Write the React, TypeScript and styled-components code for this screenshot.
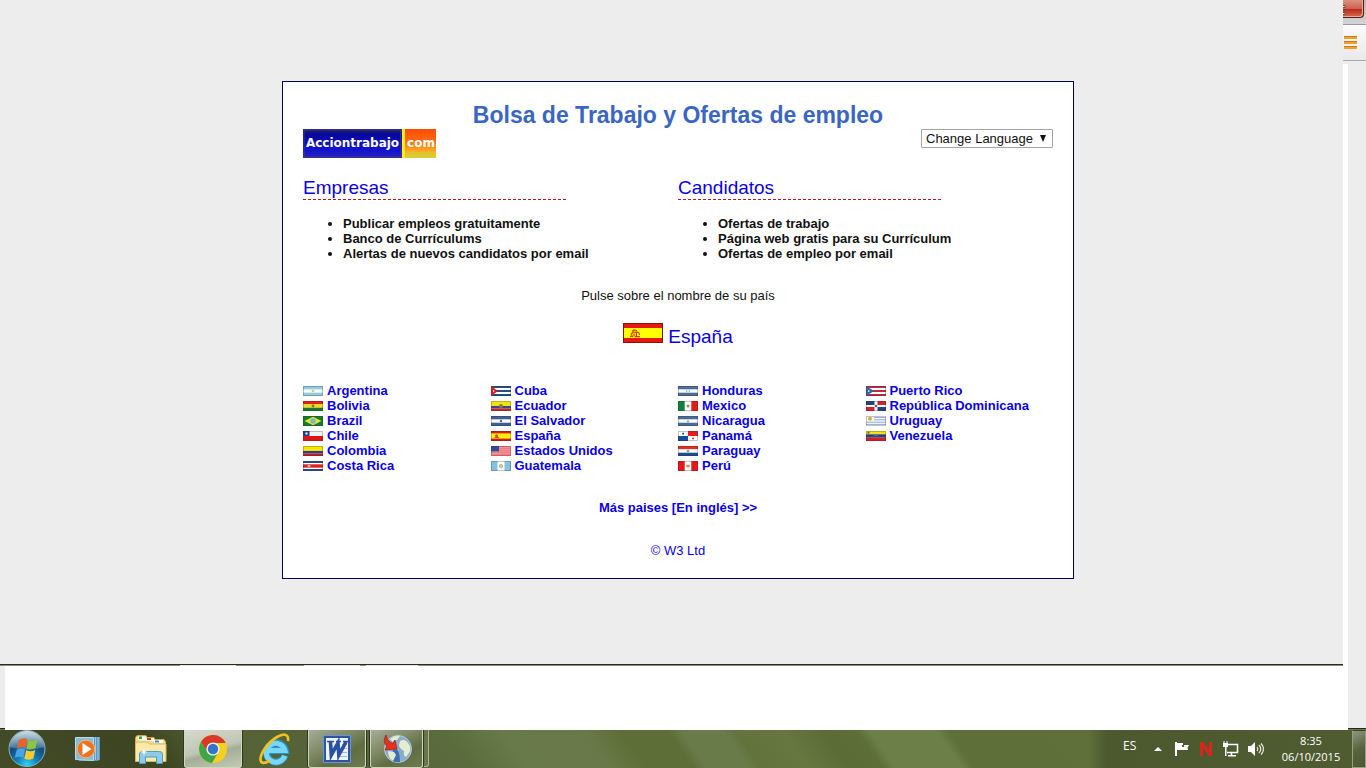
import React from "react";
import styled, { createGlobalStyle } from "styled-components";

const Global = createGlobalStyle`
  * { box-sizing: border-box; }
  body { margin: 0; background: #fff; font: 13px/15px "Liberation Sans", Arial, sans-serif; color: #111; }
  a { color: #0a00e4; text-decoration: none; }
  a:hover { text-decoration: underline; }
  svg { display: block; flex: none; }
`;

const Screen = styled.div`
  min-height: 100vh;
  display: flex;
  flex-direction: column;
`;
const Upper = styled.div`
  flex: 1;
  display: flex;
`;
const Page = styled.main`
  flex: 1;
  display: flex;
  flex-direction: column;
  background: #ededed;
`;
const PageBody = styled.div`
  flex: 1;
  padding: 81px 0 32px 13px;
`;
const Seam = styled.div`
  height: 2px;
  background:
    linear-gradient(90deg, transparent 180px, #e4e4e0 180px 236px, transparent 236px 304px,
      #e4e4e0 304px 360px, transparent 360px 366px, #e4e4e0 366px 418px, transparent 418px) 0 1px / 100% 1px no-repeat,
    linear-gradient(#2b2b20 50%, #8f8c74 50%);
`;

const Edge = styled.aside`
  width: 23px;
  display: flex;
  flex-direction: column;
  overflow: hidden;
`;
const CaptionBar = styled.div`
  height: 24px;
  background: linear-gradient(#b9b9bb, #d4d4d6);
`;
const CloseButton = styled.button`
  display: block;
  width: 21px;
  height: 18px;
  padding: 2px 0 0;
  border: solid #571d18;
  border-width: 0 1px 1px 0;
  border-radius: 0 0 4px 0;
  background: linear-gradient(#dc8f7f, #cf6350 50%, #b42a17 52%, #d9684c);
  box-shadow: inset -1px -1px 0 #e9a899;
`;
const ToolStrip = styled.div`
  height: 37px;
  padding: 11px 0 0 1px;
  border-top: 1px solid #9a9a9a;
  border-bottom: 1px solid #a9a9a9;
  background: linear-gradient(#fbfbfb, #e9e9e9);
`;
const MenuButton = styled.button`
  display: block;
  padding: 0;
  border: 0;
  background: none;
`;
const Gutter = styled.div`
  flex: 1;
  margin-top: 3px;
  border-left: 5px solid #fff;
  background: #ededed;
  box-shadow: 0 -3px 0 #ededed;
`;

const Card = styled.section`
  width: 792px;
  max-width: 100%;
  margin: 0 auto;
  padding: 20px;
  border: 1px solid #000050;
  background: #fff;
`;
const Title = styled.h1`
  margin: 0;
  font-size: 23px;
  line-height: 27px;
  text-align: center;
  color: #3a66c2;
`;
const Header = styled.header`
  display: flex;
  justify-content: space-between;
  align-items: flex-start;
  margin-bottom: 18px;
`;
const Logo = styled.a`
  display: flex;
  height: 29px;
  font: bold 12px/29px "DejaVu Sans", Verdana, sans-serif;
  color: #fff;
`;
const LogoName = styled.span`
  width: 99px;
  text-align: center;
  background: linear-gradient(#20205c, #0606a0 20%, #1414d0 75%, #2c22b4);
  box-shadow: inset 0 0 0 2px rgba(60, 60, 140, 0.5);
`;
const LogoSuffix = styled.span`
  width: 34px;
  padding-left: 1px;
  border-left: 3px solid #ffee11;
  text-align: center;
  background: linear-gradient(#ff4a08, #ff6a10 40%, #ffb028 80%, #d4cc30 84%, #dccb38);
`;
const SelectWrap = styled.div`
  position: relative;
`;
const Select = styled.select`
  appearance: none;
  display: block;
  width: 132px;
  height: 19px;
  padding: 0 16px 0 4px;
  border: 1px solid #a5a5a5;
  border-radius: 1px;
  background: #fff;
  color: #111;
  font: 13px/15px "Liberation Sans", Arial, sans-serif;
`;
const SelectArrow = styled.svg`
  position: absolute;
  right: 7px;
  top: 6px;
  pointer-events: none;
`;
const Columns = styled.div`
  display: grid;
  grid-template-columns: 1fr 1fr;
  margin-bottom: 27px;
`;
const Heading = styled.h2`
  width: 70%;
  margin: 0 0 16px;
  padding-top: 1px;
  border-bottom: 1px dashed #b01c24;
  font-size: 19px;
  line-height: 22px;
  font-weight: normal;
`;
const Features = styled.ul`
  margin: 0;
  padding-left: 40px;
  font-weight: bold;
`;
const Centered = styled.p<{ $gap?: number }>`
  margin: 0 0 ${(p) => p.$gap ?? 0}px;
  text-align: center;
`;
const MainCountry = styled.a`
  display: flex;
  justify-content: center;
  align-items: flex-start;
  gap: 5px;
  margin-bottom: 32px;
  font-size: 19px;
  line-height: 28px;
`;
const Countries = styled.ul`
  display: grid;
  grid-template: repeat(6, 15px) / repeat(4, 1fr);
  grid-auto-flow: column;
  margin: 0 0 27px;
  padding: 0;
  list-style: none;
  font-weight: bold;
`;
const CountryLink = styled.a`
  display: flex;
  align-items: center;
  gap: 4px;
  white-space: nowrap;
`;

const Blank = styled.div`
  display: flex;
  height: 64px;
  padding: 0 18px 0 5px;
  background: linear-gradient(#ededed 62px, #26281a 62px 63px, #6d7558 63px);
`;
const BlankSheet = styled.div`
  flex: 1;
  background: #fff;
`;

const Taskbar = styled.footer`
  display: flex;
  height: 38px;
  background: linear-gradient(55deg,
    #444b27 0%, #3c4422 12%, #556235 17%, #56643a 28%, #5b6c3d 34%, #697a4a 38%, #687848 43.8%,
    #5d6e37 46.5%, #5d6e37 49.8%, #697b49 50.8%, #697b49 53.8%, #62733c 54.7%, #66773f 58%,
    #5b6c37 61%, #5d6e37 63.4%, #6c7f48 64.3%, #6c7f48 69.1%, #5e6f39 70%, #60713a 100%);
`;
const Tasks = styled.nav`
  flex: 1;
  display: flex;
  padding-left: 7px;
`;
const TaskButton = styled.button<{ $width: number; $state?: "open" | "active"; $gap?: number }>`
  display: flex;
  justify-content: center;
  align-items: center;
  width: ${(p) => p.$width}px;
  height: 38px;
  margin-right: ${(p) => p.$gap ?? 0}px;
  padding: 0;
  border: ${(p) => (p.$state ? "solid #d0d6bc" : "solid transparent")};
  border-width: 0 1px 1px;
  border-radius: 0 0 3px 3px;
  box-shadow: ${(p) => (p.$state ? "-1px 0 0 #30371d, 1px 0 0 #30371d" : "none")};
  background: ${(p) =>
    p.$state === "active"
      ? "linear-gradient(165deg, #d6d9ce, #c0c6b4 50%, #a6ad96 60%, #c3cab4)"
      : p.$state === "open"
      ? "linear-gradient(150deg, #a6ad98, #7d8864 40%, #606d42 65%, #6d7b50)"
      : "none"};
`;
const StackEdge = styled.div`
  width: 5px;
  height: 37px;
  margin-left: 1px;
  border: solid #aab292;
  border-width: 0 1px 1px 0;
  border-radius: 0 0 3px 0;
  background: #68754a;
`;
const Tray = styled.div`
  display: flex;
  align-items: center;
  padding-left: 34px;
  color: #fff;
  font: 11px/16px "Open Sans", "Noto Sans", sans-serif;
  background: linear-gradient(90deg, rgba(66, 80, 42, 0), #4c592f 18px, #4f5c31);
`;
const Lang = styled.span`
  width: 31px;
  padding-bottom: 6px;
  font-size: 12px;
`;
const TrayIcons = styled.div`
  display: flex;
  align-items: center;
  gap: 9px;
`;
const Clock = styled.time`
  width: 88px;
  padding-left: 6px;
  text-align: center;
`;
const ShowDesktop = styled.button`
  width: 14px;
  height: 38px;
  padding: 0;
  border: 1px solid #95a083;
  border-top-color: #3b4226;
  background: linear-gradient(150deg, #8e977f, #59643f 50%, #4c582f);
`;

const flagArt: Record<string, React.ReactNode> = {
  Argentina: (<><path fill="#8fcbe4" d="M0 0h20v10H0z" /><path fill="#f4faf8" d="M0 3.3h20v3.4H0z" /><circle cx="10" cy="5" r="1.3" fill="#dcd24c" /></>),
  Bolivia: (<><path fill="#e32012" d="M0 0h20v3.4H0z" /><path fill="#f6dc10" d="M0 3.3h20v3.4H0z" /><path fill="#177a28" d="M0 6.7h20V10H0z" /><circle cx="10" cy="5" r="1.4" fill="#8a6a24" /></>),
  Brazil: (<><path fill="#157c28" d="M0 0h20v10H0z" /><path fill="#e8e03c" d="M10 .8 18.5 5 10 9.2 1.5 5z" /><circle cx="10" cy="5" r="2.7" fill="#79b8c4" /></>),
  Chile: (<><path fill="#f4f4f4" d="M0 0h20v5H0z" /><path fill="#e01414" d="M0 5h20v5H0z" /><path fill="#1c3f94" d="M0 0h6.5v5H0z" /><path fill="#fff" d="M2.5 1.5h2v2h-2z" /></>),
  Colombia: (<><path fill="#f4e400" d="M0 0h20v5H0z" /><path fill="#24408e" d="M0 5h20v2.5H0z" /><path fill="#c4182a" d="M0 7.5h20V10H0z" /></>),
  "Costa Rica": (<><path fill="#2d4a84" d="M0 0h20v10H0z" /><path fill="#fff" d="M0 2h20v6H0z" /><path fill="#e22020" d="M0 3.3h20v3.4H0z" /><ellipse cx="6" cy="5" rx="1.6" ry="1.3" fill="#c8b8b0" /></>),
  Cuba: (<><path fill="#234f86" d="M0 0h20v10H0z" /><path fill="#fff" d="M0 2h20v2H0zM0 6h20v2H0z" /><path fill="#df1d1d" d="M0 0 7 5 0 10z" /><path fill="#fff" d="M2 4.300h1.300v1.400H2z" /></>),
  Ecuador: (<><path fill="#f2e212" d="M0 0h20v5H0z" /><path fill="#38488a" d="M0 5h20v2.5H0z" /><path fill="#c82828" d="M0 7.5h20V10H0z" /><circle cx="10" cy="5" r="2" fill="#8b7a3c" /></>),
  "El Salvador": (<><path fill="#3c5f96" d="M0 0h20v10H0z" /><path fill="#fff" d="M0 3.3h20v3.4H0z" /><circle cx="10" cy="5" r="1.2" fill="#576b58" /></>),
  España: (<><path fill="#dd1c14" d="M0 0h20v10H0z" /><path fill="#ffee08" d="M0 2.4h20v5.2H0z" /><path fill="#d0521c" d="M4 4.2 5.5 3l1.5 1.2v1.3l1.5 1.4h-5l.8-1.2z" /></>),
  "Estados Unidos": (<><path fill="#f47c80" d="M0 0h20v10H0z" /><path stroke="#f69a9c" strokeWidth=".7" d="M0 1.5h20M0 3.5h20M0 5.5h20M0 7.5h20" /><path fill="#2c4f96" d="M0 0h8v5.4H0z" /></>),
  Guatemala: (<><path fill="#84c1e2" d="M0 0h20v10H0z" /><path fill="#fff" d="M6.5 0h7v10h-7z" /><circle cx="10" cy="5" r="2" fill="#a8b87c" /><circle cx="10" cy="5" r=".8" fill="#e8ecd8" /></>),
  Honduras: (<><path fill="#4a6d96" d="M0 0h20v10H0z" /><path fill="#fff" d="M0 3.3h20v3.4H0z" /><path stroke="#a5c4de" d="M8.500 3.700v2.600M11.500 3.700v2.600M9.500 5h1" /></>),
  Mexico: (<><path fill="#0f803c" d="M0 0h7v10H0z" /><path fill="#fff" d="M6.7 0h6.6v10H6.7z" /><path fill="#e01c18" d="M13.3 0H20v10h-6.7z" /><circle cx="10" cy="5" r="1.5" fill="#a48a58" /></>),
  Nicaragua: (<><path fill="#4a6d96" d="M0 0h20v10H0z" /><path fill="#fff" d="M0 3.3h20v3.4H0z" /><path fill="#8cb0b8" d="m10 3.8 1.6 2.4H8.4z" /></>),
  Panamá: (<><path fill="#fff" d="M0 0h20v10H0z" /><path fill="#e81c20" d="M10 0h10v5H10z" /><path fill="#184c9c" d="M0 5h10v5H0z" /><path fill="#184c9c" d="M4.2 1.8h1.8v1.6H4.2z" /><path fill="#e81c20" d="M14.2 6.7H16v1.6h-1.8z" /></>),
  Paraguay: (<><path fill="#e62c1c" d="M0 0h20v3.4H0z" /><path fill="#fff" d="M0 3.3h20v3.4H0z" /><path fill="#1c4c94" d="M0 6.7h20V10H0z" /><circle cx="10" cy="5" r="1.3" fill="#8e9c8c" /></>),
  Perú: (<><path fill="#e8161a" d="M0 0h20v10H0z" /><path fill="#fff" d="M6.7 0h6.6v10H6.7z" /><ellipse cx="10" cy="5" rx="1.9" ry="1.5" fill="#b09868" /></>),
  "Puerto Rico": (<><path fill="#c22844" d="M0 0h20v10H0z" /><path fill="#fff" d="M0 2h20v2H0zM0 6h20v2H0z" /><path fill="#2f65a4" d="M0 0 8 5 0 10z" /><path fill="#fff" d="M2 4.300h1.400v1.400H2z" /></>),
  "República Dominicana": (<><path fill="#fff" d="M0 0h20v10H0z" /><path fill="#24427c" d="M0 0h8.5v4H0zM11.5 6H20v4h-8.5z" /><path fill="#d42030" d="M11.5 0H20v4h-8.5zM0 6h8.5v4H0z" /><circle cx="10" cy="5" r="1.3" fill="#48604c" /></>),
  Uruguay: (<><path fill="#fbfbfb" d="M0 0h20v10H0z" /><path stroke="#8cace0" d="M8 1.6h12M8 3.8h12M0 6.2h20M0 8.4h20" /><circle cx="4" cy="2.8" r="2" fill="#ccb43c" /></>),
  Venezuela: (<><path fill="#f4e210" d="M0 0h20v3.4H0z" /><path fill="#28407c" d="M0 3.3h20v3.4H0z" /><path fill="#d81c24" d="M0 6.7h20V10H0z" /><circle cx="2.5" cy="1.8" r="1.2" fill="#907824" /><path stroke="#c8d0e0" strokeWidth=".6" strokeDasharray=".7 .7" d="M7.5 5.4q2.5-1.6 5 0" fill="none" /></>),
};
const countries = Object.keys(flagArt);

const Flag = ({ name }: { name: string }) => (
  <svg width="20" height="10" viewBox="0 0 20 10" aria-hidden="true">
    {flagArt[name]}
    <path fill="none" stroke="#303030" strokeOpacity=".28" d="M.5.5h19v9H.5z" />
  </svg>
);

const SpainFlag = () => (
  <svg width="40" height="20" viewBox="0 0 40 20" aria-hidden="true">
    <path fill="#e81810" d="M0 0h40v20H0z" />
    <path fill="#ffff00" d="M1 5h38v10H1z" />
    <g fill="none" stroke="#d83c10" strokeWidth="1.2">
      <path d="M9 8.5 11 7l3 .5M8 11l2-1.5M10 9.2h5M11 10.5v3M13.4 9.5v4M15.5 9l1.2 3M7 13.5h3M12 13.6h5M7.5 12.2h2" />
    </g>
    <path fill="none" stroke="#601810" strokeOpacity=".8" d="M.5.5h39v19H.5z" />
  </svg>
);

const StartIcon = () => (
  <svg width="40" height="38" viewBox="0 0 40 38">
    <defs>
      <radialGradient id="orb" cx=".5" cy=".95" r=".85"><stop offset="0" stopColor="#2fd5f8" /><stop offset=".35" stopColor="#117fb8" /><stop offset=".7" stopColor="#164a78" /><stop offset="1" stopColor="#6f93a8" /></radialGradient>
      <linearGradient id="shine" x2="0" y2="1"><stop offset="0" stopColor="#dce8ec" stopOpacity=".85" /><stop offset="1" stopColor="#7aa5bc" stopOpacity=".4" /></linearGradient>
    </defs>
    <circle cx="20" cy="18.5" r="18" fill="url(#orb)" stroke="#8fb0b8" />
    <path fill="url(#shine)" d="M3 17A17 16 0 0 1 37 17q-17 5-34 0z" />
    <path fill="#e9622a" d="M12 10q4.500-3 8.500-.5L18.500 18q-4-2-8.500.5z" />
    <path fill="#8dc53e" d="M21.500 10q4 2.500 9-.5L28.500 18q-5 2.500-9 .5z" />
    <path fill="#4aa3e4" d="M9.700 19.800q4.500-2.500 8.500-.3l-2 8.500q-4-2.500-8.500 0z" />
    <path fill="#fbcb2d" d="M19.300 20q4 2.500 9 0l-2 8.500q-5 2.500-9 0z" />
  </svg>
);
const PlayerIcon = () => (
  <svg width="28" height="28" viewBox="0 0 28 28">
    <path fill="#5b9ac0" d="M5 2h21v23l-3 1H5z" />
    <path stroke="#c2e0f0" strokeWidth=".7" d="M21.500 2v23M24 2v23" />
    <path fill="#8abbd6" stroke="#bcdbe8" d="M1.500 2.500h18v23l-18-1z" />
    <circle cx="12" cy="14" r="8.800" fill="#ec7420" stroke="#f7b27c" />
    <path fill="#fff" d="m8.500 8 9 6-9 6z" />
  </svg>
);
const ExplorerIcon = () => (
  <svg width="34" height="32" viewBox="0 0 34 32">
    <path fill="#f3dc8c" stroke="#c9a848" d="M1.500 4.500 3 2.500h9l1 2h7l1 2h9l1.500 2V28h-30z" />
    <path fill="#fff" d="M4 3.500h8v4H4zM12 5h8v3h-8zM20 7h9v3h-9z" />
    <path fill="#25b02c" d="M5 3.500h3v2.500H5z" /><path fill="#d83a24" d="M13 5h4v2h-4z" /><path fill="#2a8ed8" d="M21 7.500h4v2h-4z" />
    <path fill="#fae9a8" stroke="#d8b860" d="M1.500 9h12l2 2h16.500v17.500H1.500z" />
    <path fill="#8fcbe8" stroke="#4b9cc8" d="M5.500 29.500V21q0-2.500 3-2.500h17q3 0 3 2.500v9.500h-6V24h-11v6.500h-6z" />
    <path fill="#fff" d="m10 15 .8 3.200L14 19l-3.200.8L10 23l-.8-3.200L6 19l3.200-.8z" />
  </svg>
);
const ChromeIcon = () => (
  <svg width="30" height="30" viewBox="0 0 30 30">
    <circle cx="15" cy="15" r="14" fill="#f7cf1c" />
    <path fill="#d8392b" d="M2.900 8A14 14 0 0 1 27.600 9H15L9 17z" />
    <path fill="#3fa648" d="M2.900 8A14 14 0 0 0 14 29l6.500-11L15 20l-5.500-2.500z" />
    <circle cx="15" cy="15" r="6.600" fill="#f3f3ec" />
    <circle cx="15" cy="15" r="5.200" fill="#3474ca" />
  </svg>
);
const ExplorerEIcon = () => (
  <svg width="34" height="34" viewBox="0 0 34 34">
    <path fill="none" stroke="#2596d0" strokeWidth="7" d="M27 23.500A9.500 9.500 0 1 1 27.300 18.500H10" />
    <path fill="none" stroke="#7ad6f8" strokeWidth="5" d="M26.800 23.800A9.500 9.500 0 1 1 27 18.500H10" />
    <path fill="none" stroke="#f2c21c" strokeWidth="2.600" d="M30 9C31 2 26 1 19 5 9 11 2 22 2.500 28c.5 4 5 3.500 9.500.5" />
  </svg>
);
const WordIcon = () => (
  <svg width="30" height="30" viewBox="0 0 30 30">
    <path fill="#2c55a4" stroke="#6d94d4" d="M1.500 1.500h27v27h-27z" />
    <path fill="#eef3fb" d="M4 4h22v22H4z" />
    <path stroke="#9fb6dc" d="M20 10.500h5M20 14.500h5M18 18.500h7M17 22.500h8" />
    <path fill="none" stroke="#2850a0" strokeWidth="3.600" d="m8.500 8 .8 13L16 9l.8 12L24 8" />
    <path stroke="#2850a0" strokeWidth="1.600" d="M5 7.500h7M14 7.500h5M21 7.500h5.500" />
  </svg>
);
const GlobeIcon = () => (
  <svg width="32" height="32" viewBox="0 0 32 32">
    <circle cx="17" cy="16" r="13.500" fill="#8aaccc" stroke="#b8ccd8" />
    <path fill="#3b6fae" d="M12 17q7-4 7 12-6 1-9-3z" />
    <path fill="#e4edd0" d="M19 8q5-3 8 2 4 5 1 10l-3 4q-3-1-2-6-5-3-5-6zM7 18l6 1 2 3-3 6q-5-3-5-10zM9 6q5-4 10-3l-3 4-4 2z" />
    <path fill="#e8301c" stroke="#9c1c10" strokeWidth=".7" d="M5 2Q1 9 6 13l-2 4 12-1-2-9-2.500 3.500Q6 8 5 2z" />
  </svg>
);

const App = () => (
  <Screen>
    <Global />
    <Upper>
      <Page>
        <PageBody>
          <Card>
            <Title>Bolsa de Trabajo y Ofertas de empleo</Title>
            <Header>
              <Logo href="#inicio">
                <LogoName>Acciontrabajo</LogoName>
                <LogoSuffix>com</LogoSuffix>
              </Logo>
              <SelectWrap>
                <Select aria-label="Change Language">
                  <option>Change Language</option>
                </Select>
                <SelectArrow width="6" height="7" viewBox="0 0 6 7" aria-hidden="true">
                  <path fill="#111" d="M0 0h6L3 7z" />
                </SelectArrow>
              </SelectWrap>
            </Header>
            <Columns>
              <section>
                <Heading><a href="#empresas">Empresas</a></Heading>
                <Features>
                  <li>Publicar empleos gratuitamente</li>
                  <li>Banco de Currículums</li>
                  <li>Alertas de nuevos candidatos por email</li>
                </Features>
              </section>
              <section>
                <Heading><a href="#candidatos">Candidatos</a></Heading>
                <Features>
                  <li>Ofertas de trabajo</li>
                  <li>Página web gratis para su Currículum</li>
                  <li>Ofertas de empleo por email</li>
                </Features>
              </section>
            </Columns>
            <Centered $gap={20}>Pulse sobre el nombre de su país</Centered>
            <MainCountry href="#espana"><SpainFlag />España</MainCountry>
            <Countries>
              {countries.map((name) => (
                <li key={name}>
                  <CountryLink href={`#${name}`}><Flag name={name} />{name}</CountryLink>
                </li>
              ))}
            </Countries>
            <Centered $gap={28}><a href="#mas"><b>Más paises [En inglés] &gt;&gt;</b></a></Centered>
            <Centered><a href="#w3">© W3 Ltd</a></Centered>
          </Card>
        </PageBody>
        <Seam />
      </Page>
      <Edge>
        <CaptionBar>
          <CloseButton aria-label="Cerrar">
            <svg width="4" height="12" viewBox="0 0 4 12"><path fill="#eee" stroke="#555" d="M-1 1.500h3v2h-3zM-1 8.500h3v2h-3z" /></svg>
          </CloseButton>
        </CaptionBar>
        <ToolStrip>
          <MenuButton aria-label="Menú">
            <svg width="13" height="13" viewBox="0 0 13 13">
              <path fill="#f4a030" d="M0 0h13v3H0zM0 5h13v3H0zM0 10h13v3H0z" />
              <path fill="#cc7c14" d="M0 0h13v1H0zM0 5h13v1H0zM0 10h13v1H0z" />
            </svg>
          </MenuButton>
        </ToolStrip>
        <Gutter />
      </Edge>
    </Upper>
    <Blank><BlankSheet /></Blank>
    <Taskbar>
      <Tasks>
        <TaskButton $width={40} $gap={20} aria-label="Inicio"><StartIcon /></TaskButton>
        <TaskButton $width={42} $gap={20} aria-label="Reproductor"><PlayerIcon /></TaskButton>
        <TaskButton $width={44} $gap={11} aria-label="Explorador"><ExplorerIcon /></TaskButton>
        <TaskButton $width={58} $gap={13} $state="active" aria-label="Chrome"><ChromeIcon /></TaskButton>
        <TaskButton $width={40} $gap={13} aria-label="Internet Explorer"><ExplorerEIcon /></TaskButton>
        <TaskButton $width={58} $gap={4} $state="open" aria-label="Word"><WordIcon /></TaskButton>
        <TaskButton $width={53} $state="open" aria-label="Descargas"><GlobeIcon /></TaskButton>
        <StackEdge />
      </Tasks>
      <Tray>
        <Lang>ES</Lang>
        <TrayIcons>
          <svg width="11" height="14" viewBox="0 0 11 14"><path fill="#fff" d="M0 9 4 5l4 4z" /></svg>
          <svg width="16" height="16" viewBox="0 0 16 16"><path fill="#fff" d="M1 1h2v14H1zM3 2h6v7H3zM9 4h6l-1.500 3L14 9H9z" /><path fill="#56633a" d="M8 4h2v2H8z" /></svg>
          <svg width="14" height="14" viewBox="0 0 14 14"><path fill="#d8261c" d="M1 0h3l6 8V0h3v14h-3L4 6v8H1z" /></svg>
          <svg width="17" height="16" viewBox="0 0 17 16"><path fill="none" stroke="#fff" strokeWidth="1.500" d="M6 3.500h9.500v8H5M9.500 12v2.500M6 14.700h8" /><path fill="#fff" d="M1 2h5v4H4.500v9H3V6H1zM1.500 0h1v2h-1zM4.500 0h1v2h-1z" /></svg>
          <svg width="16" height="16" viewBox="0 0 16 16"><path fill="#fff" d="M0 5h3l4-4v14l-4-4H0z" /><path fill="none" stroke="#e4e8da" strokeWidth="1.200" d="M9 6q1.500 2 0 4M11 4q3.500 4 0 8M13 2.500q5 5.500 0 11" /></svg>
        </TrayIcons>
        <Clock>8:35<br />06/10/2015</Clock>
        <ShowDesktop aria-label="Mostrar escritorio" />
      </Tray>
    </Taskbar>
  </Screen>
);

export default App;
